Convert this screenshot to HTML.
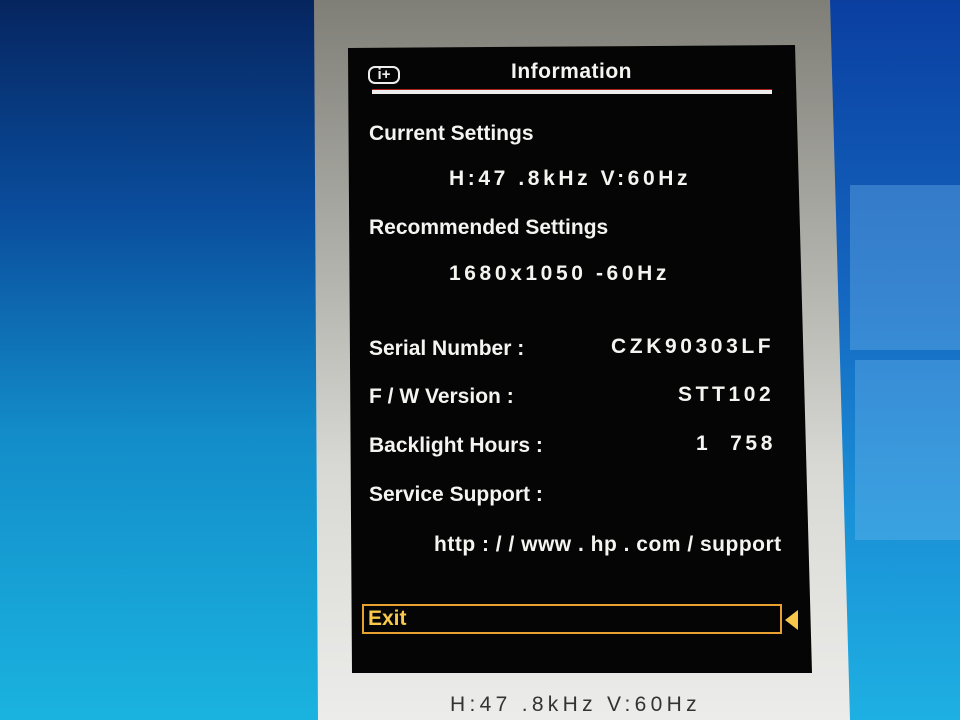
<!DOCTYPE html>
<html><head><style>
html,body{margin:0;padding:0;width:960px;height:720px;overflow:hidden;background:#0a3d8a}
.bg{position:absolute;left:0;top:0;width:960px;height:720px;background:linear-gradient(180deg,#06255f 0%,#0a4e9e 30%,#138cc9 60%,#1ab3df 100%)}
.bgr{position:absolute;left:820px;top:0;width:140px;height:720px;background:linear-gradient(180deg,#0a3fa0 0%,#1466c0 40%,#1a8fd6 70%,#1eb0e2 100%)}
.pane{position:absolute;background:rgba(120,190,240,.35)}
.panel{position:absolute;left:0;top:0;width:960px;height:720px;clip-path:polygon(314px 0,830px 0,850px 720px,318px 720px);background:linear-gradient(180deg,#7f7f78 0%,#a8a8a2 30%,#d8d8d4 65%,#ececea 100%)}
.osd{position:absolute;left:0;top:0;width:960px;height:720px;clip-path:polygon(348px 48px,795px 45px,812px 673px,352px 673px);background:#050505}
.t{position:absolute;font-family:"Liberation Sans",sans-serif;font-weight:bold;color:#f4f4f0;font-size:21px;white-space:nowrap;letter-spacing:0}
.w{letter-spacing:3.6px}
</style></head><body>
<div class="bg"></div>
<div class="bgr"></div>
<div class="pane" style="left:850px;top:185px;width:110px;height:165px"></div>
<div class="pane" style="left:855px;top:360px;width:105px;height:180px"></div>
<div class="panel"></div>
<div class="osd"></div>
<div style="position:absolute;left:368px;top:66px;width:32px;height:18px;border:2px solid #eee;border-radius:7px;box-sizing:border-box;color:#eee;font:bold 15px 'Liberation Sans',sans-serif;line-height:14px;text-align:center">i+</div>
<div class="t" style="left:511px;top:60px;letter-spacing:.5px">Information</div>
<div style="position:absolute;left:372px;top:89px;width:400px;height:4px;background:#eee;border-top:1px solid #a22"></div>
<div class="t" style="left:369px;top:122px">Current Settings</div>
<div class="t w" style="left:449px;top:167px">H:47 .8kHz V:60Hz</div>
<div class="t" style="left:369px;top:216px">Recommended Settings</div>
<div class="t w" style="left:449px;top:262px">1680x1050 -60Hz</div>
<div class="t" style="left:369px;top:337px">Serial Number :</div>
<div class="t w" style="left:611px;top:335px">CZK90303LF</div>
<div class="t" style="left:369px;top:385px">F / W Version :</div>
<div class="t w" style="left:678px;top:383px">STT102</div>
<div class="t" style="left:369px;top:434px">Backlight Hours :</div>
<div class="t w" style="left:696px;top:432px">1&nbsp;&nbsp;758</div>
<div class="t" style="left:369px;top:483px">Service Support :</div>
<div class="t" style="left:434px;top:533px;letter-spacing:.5px">http : / / www . hp . com / support</div>
<div style="position:absolute;left:362px;top:604px;width:420px;height:30px;border:2px solid #e8a030;box-sizing:border-box"></div>
<div class="t" style="left:368px;top:607px;color:#f7c84a">Exit</div>
<div style="position:absolute;left:785px;top:610px;width:0;height:0;border-top:10px solid transparent;border-bottom:10px solid transparent;border-right:13px solid #f7c84a"></div>
<div class="t" style="left:450px;top:693px;color:#333;font-weight:normal;font-size:21px;letter-spacing:4.3px">H:47 .8kHz V:60Hz</div>
</body></html>
